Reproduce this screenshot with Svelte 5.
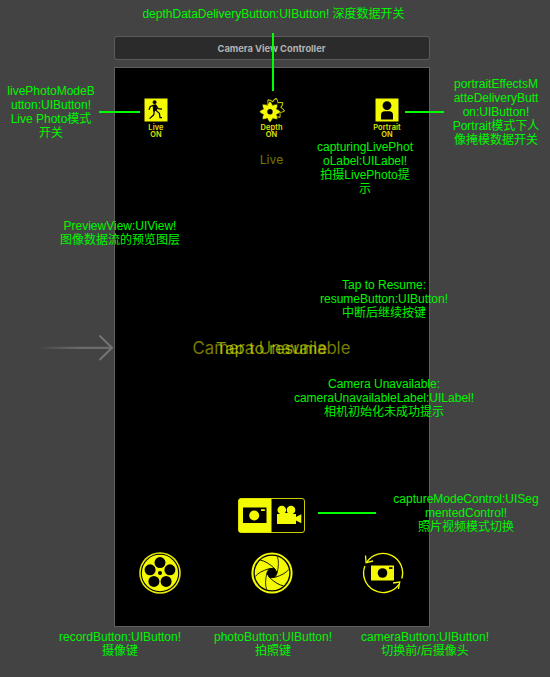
<script>
  const notes = [
    { x: 273.5, y: 7, lines: ['depthDataDeliveryButton:UIButton! 深度数据开关'] },
    { x: 51, y: 84, lines: ['livePhotoModeB', 'utton:UIButton!', 'Live Photo模式', '开关'] },
    { x: 496, y: 77, lines: ['portraitEffectsM', 'atteDeliveryButt', 'on:UIButton!', 'Portrait模式下人', '像掩模数据开关'] },
    { x: 365, y: 140, lines: ['capturingLivePhot', 'oLabel:UILabel!', '拍摄LivePhoto提', '示'] },
    { x: 120, y: 219, lines: ['PreviewView:UIView!', '图像数据流的预览图层'] },
    { x: 384, y: 278, lines: ['Tap to Resume:', 'resumeButton:UIButton!', '中断后继续按键'] },
    { x: 384, y: 377, lines: ['Camera Unavailable:', 'cameraUnavailableLabel:UILabel!', '相机初始化未成功提示'] },
    { x: 466, y: 492, lines: ['captureModeControl:UISeg', 'mentedControl!', '照片视频模式切换'] },
    { x: 120, y: 630, lines: ['recordButton:UIButton!', '摄像键'] },
    { x: 273, y: 630, lines: ['photoButton:UIButton!', '拍照键'] },
    { x: 425, y: 630, lines: ['cameraButton:UIButton!', '切换前/后摄像头'] }
  ];
  const polar = (r, deg) => {
    const a = (deg * Math.PI) / 180;
    return `${(r * Math.cos(a)).toFixed(2)} ${(r * Math.sin(a)).toFixed(2)}`;
  };
  const holes = [0, 1, 2, 3, 4].map((i) => polar(10.4, -90 + i * 72).split(' ').map((v) => 21 + Number(v)));
  const blades = [0, 60, 120, 180, 240, 300];
  // Flower with eight pointed petals, centred on the origin.
  const flower = [0, 45, 90, 135, 180, 225, 270, 315]
    .map((a, i) => `${i ? 'L' : 'M'}${polar(7, a - 22.5)}Q${polar(9, a - 13)} ${polar(10.6, a)}Q${polar(9, a + 13)} ${polar(7, a + 22.5)}`)
    .join('') + 'Z';
</script>

<main>
  <header>Camera View Controller</header>
  <section class="screen">
    <div class="modes">
      <button>
        <svg width="24" height="24" viewBox="0 0 24 24">
          <rect x=".5" y=".5" width="23" height="23" fill="#f4fa00" />
          <circle cx="10.6" cy="4.2" r="1.9" />
          <path d="M9.2 7.2 11.8 6.7 12.6 12 9.6 13.2Z" stroke="#000" stroke-linejoin="round" />
          <path d="M9.4 7.4 6.3 8.5 5 11.8M12 7.4 14 10.6 18 11.2M12 12.4 15.4 15.4 16 19.7H18M10.2 12.8 9.8 16.8 5.6 20.6" fill="none" stroke="#000" stroke-width="1.25" stroke-linejoin="round" />
        </svg>
        <span>Live<br />ON</span>
      </button>
      <button>
        <svg class="depth" width="26" height="26" viewBox="0 0 26 26">
          <path d={flower} transform="translate(15 10.6) rotate(12)" fill="none" stroke="#c9ce00" stroke-width="1" />
          <path d={flower} transform="translate(11 13.8)" fill="#f4fa00" stroke="#000" stroke-width=".4" />
          <circle cx="11" cy="13.8" r="2.7" />
        </svg>
        <span>Depth<br />ON</span>
      </button>
      <button>
        <svg width="24" height="24" viewBox="0 0 24 24">
          <rect x=".5" y=".5" width="23" height="23" fill="#f4fa00" />
          <circle cx="12" cy="7.6" r="4.4" />
          <path d="M6 21.5V17Q6 13.2 9.8 13.2H14.2Q18 13.2 18 17V21.5Z" />
        </svg>
        <span>Portrait<br />ON</span>
      </button>
    </div>
    <div class="live">Live</div>
    <div class="messages">
      <span class="unavailable">Camera Unavailable</span>
      <span class="resume">Tap to resume</span>
    </div>
    <div class="segments">
      <svg width="67" height="35" viewBox="0 0 67 35">
        <rect x=".5" y=".5" width="66" height="34" rx="2.5" fill="#000" stroke="#c9ce00" />
        <path d="M3 .5H33.5V34.5H3Q.5 34.5.5 32V3Q.5.5 3 .5Z" fill="#f4fa00" />
        <rect x="5" y="9.5" width="23.5" height="15.5" />
        <circle cx="16.2" cy="17.5" r="5" fill="#f4fa00" />
        <path d="M23 11.2h3.8v1.8H23z" fill="#f4fa00" />
        <g fill="#f4fa00">
          <circle cx="43.8" cy="12" r="4.3" />
          <circle cx="53" cy="12" r="4.3" />
          <path d="M39 16H58V19L63.3 16.2V25.3L58 22.5V26H39Z" />
          <path d="M43 15h10v2H43z" />
        </g>
      </svg>
    </div>
    <div class="actions">
      <svg width="42" height="42" viewBox="0 0 42 42">
        <circle cx="21" cy="21" r="20.8" fill="#e4ea00" />
        <circle cx="21" cy="21" r="18.7" fill="#f4fa00" stroke="#000" stroke-width="1.1" />
        {#each holes as [x, y]}
          <circle cx={x} cy={y} r="5.5" />
        {/each}
        <circle cx="21" cy="21" r="2" />
      </svg>
      <svg width="42" height="42" viewBox="0 0 42 42">
        <circle cx="21" cy="21" r="19.6" fill="#000" stroke="#f4fa00" stroke-width="2" />
        <circle cx="21" cy="21" r="17.3" fill="#f4fa00" />
        <path d="M18.8 16.4 23.9 16.8 26.1 20.8 23.2 25.6 18.1 25.2 15.9 20.9Z" />
        {#each blades as a}
          <path d="M18.5 16.5Q24.7 16 26.1 21Q28.7 10.5 26.3 4.5" transform="rotate({a} 21 21)" fill="none" stroke="#000" stroke-width=".8" />
        {/each}
      </svg>
      <svg width="42" height="42" viewBox="0 0 42 42">
        <g fill="none" stroke="#f4fa00" stroke-width="1.35">
          <path d="M4.9 10.1A19.5 19.5 0 0 1 39.8 26.5" />
          <path d="M2.9 14A19.5 19.5 0 0 0 37 32.3" />
          <path d="M3.5 3.5 4.1 10.7 11.1 9M31 31 37.7 30.1 36.4 37" />
        </g>
        <path d="M9 13.5H32V28.5H9Z" fill="#f4fa00" />
        <circle cx="20.5" cy="21" r="4.8" />
        <path d="M27 15.2h3.5v1.7H27z" />
      </svg>
    </div>
  </section>

  <svg class="connectors" width="550" height="677" viewBox="0 0 550 677" fill="none">
    <defs>
      <linearGradient id="fade" gradientUnits="userSpaceOnUse" x1="38" y1="0" x2="80" y2="0">
        <stop offset="0" stop-color="#747474" stop-opacity="0" />
        <stop offset="1" stop-color="#747474" />
      </linearGradient>
    </defs>
    <path d="M38 347.3H112V348.3H38Z" stroke="url(#fade)" />
    <path d="M99.5 335.5 112 347.7 99.5 360" stroke="#747474" stroke-width="2" />
    <path d="M99 112H140M405 112H444M273 33V91M318 513H376" stroke="#0f0" stroke-width="2" />
  </svg>
  {#each notes as note}
    <div class="note" style="left:{note.x}px;top:{note.y}px">
      {#each note.lines as line}
        <div>{line}</div>
      {/each}
    </div>
  {/each}
</main>

<style>
  :global(body) { background: #434343; }
  main {
    position: relative;
    box-sizing: border-box;
    width: 550px;
    height: 677px;
    padding: 36px 0 0 114px;
    overflow: hidden;
    background: #434343;
    font-family: Inter, "Noto Sans CJK SC", sans-serif;
  }
  header {
    box-sizing: border-box;
    width: 316px;
    height: 24px;
    padding-right: 1px;
    border: 1px solid #5c5c5c;
    border-radius: 3px;
    background: #2b2b2b;
    color: #b2b2b2;
    font: bold 9.3px/23px Inter, sans-serif;
    text-align: center;
  }
  .screen {
    display: flex;
    flex-direction: column;
    align-items: center;
    box-sizing: border-box;
    width: 316px;
    height: 560px;
    margin-top: 7px;
    padding: 30px 1px 0 0;
    border: 1px solid #606060;
    background: #000;
  }
  .modes {
    display: flex;
    justify-content: space-between;
    width: 271px;
    height: 42px;
  }
  button {
    display: flex;
    flex-direction: column;
    align-items: center;
    width: 40px;
    padding: 0;
    border: 0;
    background: none;
    color: #e0e600;
    font: 600 7.4px/7px Inter, sans-serif;
    letter-spacing: .15px;
  }
  button svg { flex: none; }
  button .depth { margin-bottom: -2px; }
  button span { margin-top: 2px; }
  .live {
    height: 20px;
    margin-top: 10px;
    color: #747800;
    font-size: 12.2px;
    line-height: 20px;
  }
  .messages {
    display: grid;
    height: 24px;
    margin-top: 166px;
    font-size: 16.7px;
    line-height: 24px;
    text-align: center;
    white-space: nowrap;
  }
  .messages span { grid-area: 1 / 1; }
  .unavailable { color: #787c00; }
  .resume {
    color: rgba(225, 240, 0, .65);
    font-size: 16.5px;
  }
  .segments { height: 35px; margin-top: 138px; }
  .segments svg { display: block; }
  .actions {
    display: flex;
    justify-content: space-between;
    width: 265px;
    margin-top: 19px;
  }
  .connectors { position: absolute; left: 0; top: 0; pointer-events: none; }
  .note {
    position: absolute;
    transform: translateX(-50%);
    color: #00f500;
    font: 12px/14px "Liberation Sans", "Noto Sans CJK SC", sans-serif;
    text-align: center;
    white-space: nowrap;
  }
  .note div { height: 14px; }
</style>
